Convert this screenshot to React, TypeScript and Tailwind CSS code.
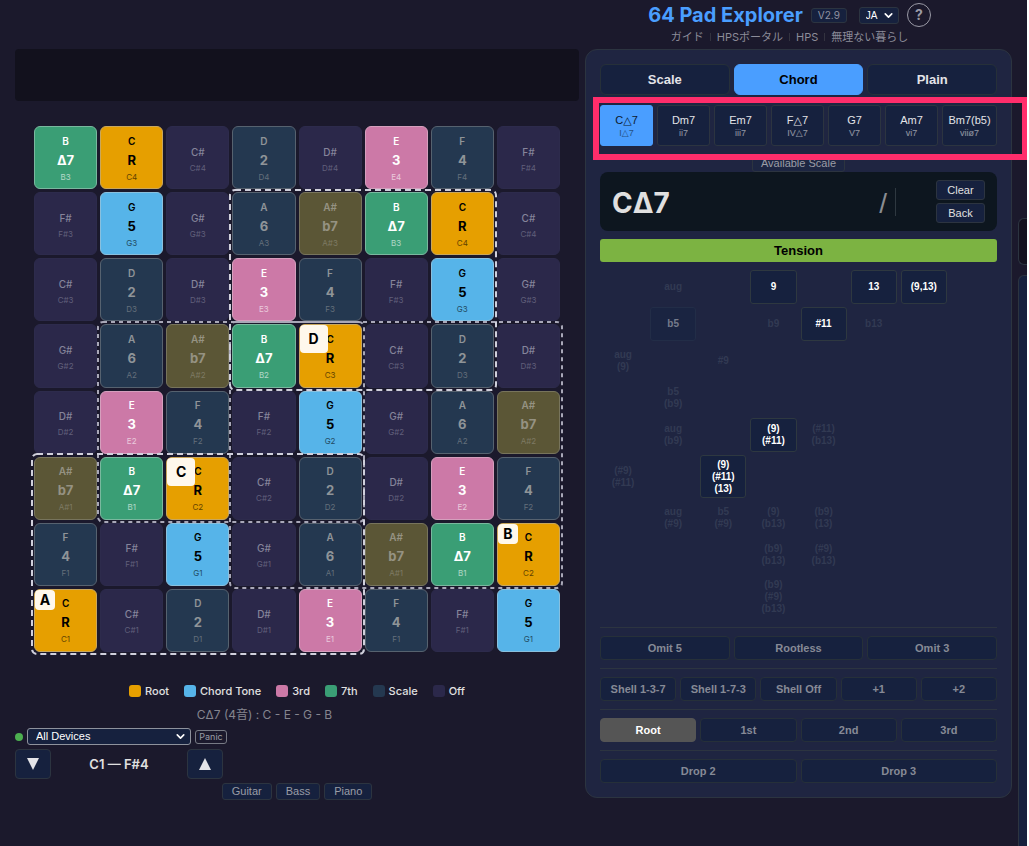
import { ReactNode } from "react";
import { ChevronDown } from "lucide-react";

const NOTES = ["C", "C#", "D", "D#", "E", "F", "F#", "G", "G#", "A", "A#", "B"];

const DEGREES: Record<string, string> = {
  C: "R",
  D: "2",
  E: "3",
  F: "4",
  G: "5",
  A: "6",
  "A#": "b7",
  B: "Δ7",
};

const PAD_STYLES: Record<string, string> = {
  R: "bg-[#e69f00] border-[#c9a75c] text-black",
  "2": "bg-[#243850] border-[#56626f] text-[#8f9498]",
  "3": "bg-[#cc79a7] border-[#d59fbd] text-white",
  "4": "bg-[#243850] border-[#56626f] text-[#8f9498]",
  "5": "bg-[#56b4e9] border-[#89c0de] text-black",
  "6": "bg-[#243850] border-[#56626f] text-[#8f9498]",
  b7: "bg-[#5b5636] border-[#77745c] text-[#959282]",
  "Δ7": "bg-[#3a9e75] border-[#79b89e] text-white",
};

// keyed by "row-col", since the same note repeats on the grid
const BADGES: Record<string, { label: string; className: string }> = {
  "7-0": { label: "A", className: "size-5" },
  "6-7": { label: "B", className: "size-5" },
  "5-2": { label: "C", className: "size-7" },
  "3-4": { label: "D", className: "size-7" },
};

const LEGEND = [
  { label: "Root", className: "bg-[#e69f00]" },
  { label: "Chord Tone", className: "bg-[#56b4e9]" },
  { label: "3rd", className: "bg-[#cc79a7]" },
  { label: "7th", className: "bg-[#3a9e75]" },
  { label: "Scale", className: "bg-[#243850]" },
  { label: "Off", className: "bg-[#2b284a]" },
];

const DIATONIC = [
  ["C△7", "I△7"],
  ["Dm7", "ii7"],
  ["Em7", "iii7"],
  ["F△7", "IV△7"],
  ["G7", "V7"],
  ["Am7", "vi7"],
  ["Bm7(b5)", "viiø7"],
];

type TensionState = "on" | "dim" | "off";

// one array per row, null leaves the cell empty
const TENSIONS: (null | [string, TensionState])[][] = [
  [null, ["aug", "off"], null, ["9", "on"], null, ["13", "on"], ["(9,13)", "on"], null],
  [null, ["b5", "dim"], null, ["b9", "off"], ["#11", "on"], ["b13", "off"], null, null],
  [["aug\n(9)", "off"], null, ["#9", "off"], null, null, null, null, null],
  [null, ["b5\n(b9)", "off"], null, null, null, null, null, null],
  [null, ["aug\n(b9)", "off"], null, ["(9)\n(#11)", "on"], ["(#11)\n(b13)", "off"], null, null, null],
  [["(#9)\n(#11)", "off"], null, ["(9)\n(#11)\n(13)", "on"], null, null, null, null, null],
  [null, ["aug\n(#9)", "off"], ["b5\n(#9)", "off"], ["(9)\n(b13)", "off"], ["(b9)\n(13)", "off"], null, null, null],
  [null, null, null, ["(b9)\n(b13)", "off"], ["(#9)\n(b13)", "off"], null, null, null],
  [null, null, null, ["(b9)\n(#9)\n(b13)", "off"], null, null, null, null],
];

const TENSION_STYLES: Record<TensionState, string> = {
  on: "bg-[#16213e] border-[#2e3840] text-white",
  dim: "bg-[#1a2441] border-[#222d47] text-[#767b8b]",
  off: "bg-transparent border-transparent text-[#323a53]",
};

const Pad = ({ row, col }: { row: number; col: number }) => {
  const pitch = (7 - row) * 5 + col;
  const note = NOTES[pitch % 12];
  const octave = Math.floor(pitch / 12) + 1;
  const degree = DEGREES[note];
  const badge = BADGES[`${row}-${col}`];

  return (
    <button
      className={`relative aspect-square min-w-0 rounded-md border flex flex-col items-center justify-center ${
        degree ? PAD_STYLES[degree] : "bg-[#2b284a] border-[#2d2b4c] pt-1 text-[#85849a]"
      }`}
    >
      <span className={`text-[10px] leading-4 ${degree ? "font-semibold" : "font-medium"}`}>
        {note}
      </span>
      {degree && <span className="text-[13px] leading-[22px] font-bold">{degree}</span>}
      <span className={`text-[8px] opacity-60 ${degree ? "leading-3" : "leading-4"}`}>
        {note}
        {octave}
      </span>
      {badge && (
        <span
          className={`absolute left-0 top-0 rounded flex items-center justify-center bg-[#fff8ec] text-black text-sm font-bold ${badge.className}`}
        >
          {badge.label}
        </span>
      )}
    </button>
  );
};

const PadGrid = () => (
  <div className="relative mx-[19px] mt-[25px] grid grid-cols-8 gap-[3px]">
    {Array.from({ length: 64 }, (_, i) => (
      <Pad key={i} row={Math.floor(i / 8)} col={i % 8} />
    ))}
    <svg
      className="absolute inset-0 size-full overflow-visible pointer-events-none"
      viewBox="0 0 526 526"
      fill="none"
      strokeWidth="2"
    >
      <g stroke="#a9a8b8" strokeDasharray="4 4">
        <rect x="64" y="196" width="266" height="200" rx="5" />
        <rect x="196" y="196" width="332" height="266" rx="5" />
      </g>
      <g stroke="#d0d0dc" strokeDasharray="6 4">
        <rect x="-2" y="328" width="332" height="200" rx="5" />
        <rect x="196" y="64" width="266" height="200" rx="5" />
      </g>
    </svg>
  </div>
);

const SmallButton = ({ children }: { children: ReactNode }) => (
  <button className="h-[17px] rounded-[3px] border border-[#2c3440] bg-[#16213e] px-[9px] font-[Liberation_Sans,sans-serif] text-[11px] leading-[15px] text-[#9a9da6]">
    {children}
  </button>
);

const OptionRow = ({
  options,
  columns,
  active,
}: {
  options: string[];
  columns: string;
  active?: string;
}) => (
  <div className={`mt-2 grid gap-1 border-t border-[#2c3440] pt-2 ${columns}`}>
    {options.map((option) => (
      <button
        key={option}
        className={`h-6 rounded border text-[11px] font-bold ${
          option === active
            ? "bg-[#555555] border-[#555555] text-white"
            : "bg-[#16213e] border-[#263039] text-[#868a96]"
        }`}
      >
        {option}
      </button>
    ))}
  </div>
);

const Header = () => (
  <header className="h-[49px] pr-[18px] flex flex-col items-center">
    <div className="mt-[3px] flex h-6 items-center">
      <h1 className="text-xl font-bold leading-6 text-[#4a9eff]">64 Pad Explorer</h1>
      <span className="ml-2 h-[15px] rounded-[3px] border border-[#2c3440] bg-[#16213e] px-1.5 text-[10px] leading-[13px] text-[#9192a0]">
        V2.9
      </span>
      <label className="relative ml-3 flex items-center">
        <select
          aria-label="Language"
          className="h-[17px] w-10 appearance-none rounded-[3px] border border-[#2c3440] bg-[#16213e] pl-1.5 font-[Liberation_Sans,sans-serif] text-[10px] leading-[15px] text-white"
        >
          <option>JA</option>
        </select>
        <ChevronDown size={13} strokeWidth={3} className="absolute right-1 text-white pointer-events-none" />
      </label>
      <button className="ml-2 size-6 rounded-full border border-[#9a9aa6] text-sm font-bold leading-5 text-[#9a9aa6]">
        ?
      </button>
    </div>
    <nav className="mt-[2px] flex items-center text-[11px] leading-4 text-[#8c8c99]">
      <a href="#guide">ガイド</a>
      <span className="mx-1.5 h-2 w-px bg-[#33333f]" />
      <a href="#portal">HPSポータル</a>
      <span className="mx-1.5 h-2 w-px bg-[#33333f]" />
      <a href="#hps">HPS</a>
      <span className="mx-1.5 h-2 w-px bg-[#33333f]" />
      <a href="#blog">無理ない暮らし</a>
    </nav>
  </header>
);

const ChordPanel = () => (
  <section className="relative rounded-xl border border-[#2c3440] bg-[#1f2541] p-3.5 font-[Liberation_Sans,DejaVu_Sans,sans-serif]">
    <div className="grid grid-cols-3 gap-1">
      {["Scale", "Chord", "Plain"].map((tab) => (
        <button
          key={tab}
          className={`h-[31px] rounded-md border text-[13px] font-bold ${
            tab === "Chord"
              ? "bg-[#4a9eff] border-[#4a9eff] text-black"
              : "bg-[#16213e] border-[#263039] text-[#e4e4e8]"
          }`}
        >
          {tab}
        </button>
      ))}
    </div>

    <div className="mt-2.5 grid grid-cols-[repeat(6,minmax(0,53fr))_minmax(0,55fr)] gap-1">
      {DIATONIC.map(([name, numeral], i) => (
        <button
          key={name}
          className={`h-[41px] min-w-0 whitespace-nowrap rounded-[3px] border ${
            i === 0
              ? "bg-[#4a9eff] border-[#4a9eff] text-[#0c1a2e]"
              : "bg-[#16213e] border-[#2c3440] text-[#e4e4e8]"
          }`}
        >
          <span className="block text-[11px] leading-[14px]">{name}</span>
          <span className="block text-[9px] leading-3 opacity-60">{numeral}</span>
        </button>
      ))}
    </div>

    <div className="mt-2 flex justify-center">
      <button className="h-[18px] rounded-[3px] border border-[#2c3440] bg-[#1d2642] px-2 text-[11px] leading-4 text-[#9a9da6]">
        Available Scale
      </button>
    </div>

    <div className="flex h-[59px] items-center rounded-lg bg-[#0d161f] px-3">
      <output className="flex-1 pt-0.5 font-[Inter,sans-serif] text-[28px] font-bold leading-8 text-[#e0e0e0]">
        CΔ7
      </output>
      <span className="pt-1 text-[28px] leading-8 text-[#8a8d92]">/</span>
      <span className="ml-2 h-7 w-px bg-[#2e3840]" />
      <div className="ml-10 flex w-[49px] flex-col gap-[3px]">
        {["Clear", "Back"].map((label) => (
          <button
            key={label}
            className="h-5 rounded-[3px] border border-[#2c3440] bg-[#16213e] text-[11px] leading-[18px] text-[#e0e0e0]"
          >
            {label}
          </button>
        ))}
      </div>
    </div>

    <button className="mt-2 h-[23px] w-full rounded-[3px] bg-[#7cb342] text-[13px] font-bold text-black">
      Tension
    </button>

    <div className="mt-2 mb-[9px] flex flex-col gap-[3px]">
      {TENSIONS.map((row, r) => (
        <div
          key={r}
          className={`grid grid-cols-8 gap-1 ${r === 5 || r === 8 ? "h-[43px]" : "h-[34px]"}`}
        >
          {row.map((cell, c) =>
            cell ? (
              <button
                key={c}
                className={`min-w-0 whitespace-pre rounded-[3px] border text-[10px] font-bold leading-3 ${TENSION_STYLES[cell[1]]}`}
              >
                {cell[0]}
              </button>
            ) : (
              <span key={c} />
            )
          )}
        </div>
      ))}
    </div>

    <OptionRow options={["Omit 5", "Rootless", "Omit 3"]} columns="grid-cols-3" />
    <OptionRow
      options={["Shell 1-3-7", "Shell 1-7-3", "Shell Off", "+1", "+2"]}
      columns="grid-cols-5"
    />
    <OptionRow options={["Root", "1st", "2nd", "3rd"]} columns="grid-cols-4" active="Root" />
    <OptionRow options={["Drop 2", "Drop 3"]} columns="grid-cols-2" />

    {/* callout around the diatonic chord bar */}
    <div className="pointer-events-none absolute -right-[17px] left-[7px] top-[47px] h-[63px] border-[6px] border-[#ff2d6b]" />
  </section>
);

export default function App() {
  return (
    <div className="flex min-h-screen gap-1.5 overflow-hidden border-r-2 border-white bg-[#1b192c] pl-[15px] font-[Inter,Noto_Sans_CJK_JP,sans-serif] text-[#e0e0e0]">
      <main className="min-w-0 flex-1 pt-[49px]">
        <div className="h-[52px] rounded bg-[#12111d]" />
        <PadGrid />

        <ul className="mt-[31px] flex justify-center gap-[15px] text-[11px] font-medium leading-4">
          {LEGEND.map(({ label, className }) => (
            <li key={label} className="flex items-center gap-1">
              <span className={`size-3 rounded-[3px] ${className}`} />
              {label}
            </li>
          ))}
        </ul>
        <p className="mt-2 pr-[65px] text-center text-xs leading-4 text-[#85858f]">
          CΔ7 (4音) : C - E - G - B
        </p>

        <div className="mt-[5px] flex items-center">
          <span className="mr-1 size-2 rounded-full bg-[#4caf50]" />
          <label className="relative flex items-center">
            <select
              aria-label="MIDI device"
              className="h-[17px] w-[164px] appearance-none rounded-[3px] border border-[#8e929c] bg-[#16213e] pl-2 font-[Liberation_Sans,sans-serif] text-[11px] leading-[15px] text-white"
            >
              <option>All Devices</option>
            </select>
            <ChevronDown size={13} strokeWidth={3} className="absolute right-1 text-white pointer-events-none" />
          </label>
          <button className="ml-1 h-3.5 w-8 rounded-[3px] border border-[#777a84] text-[9px] leading-3 text-[#9a9da6]">
            Panic
          </button>
        </div>

        <div className="mt-1 flex w-[208px] items-center justify-between">
          <button
            aria-label="Octave down"
            className="flex h-[30px] w-9 items-center justify-center rounded border border-[#2c3440] bg-[#16213e]"
          >
            <svg className="size-3" viewBox="0 0 12 12" fill="#e4e4e8">
              <path d="M0 0h12L6 12z" />
            </svg>
          </button>
          <span className="text-[13px] font-semibold leading-4">C1 — F#4</span>
          <button
            aria-label="Octave up"
            className="flex h-[30px] w-9 items-center justify-center rounded border border-[#2c3440] bg-[#16213e]"
          >
            <svg className="size-3" viewBox="0 0 12 12" fill="#e4e4e8">
              <path d="M0 12h12L6 0z" />
            </svg>
          </button>
        </div>

        <div className="mt-1 flex justify-center gap-1">
          <SmallButton>Guitar</SmallButton>
          <SmallButton>Bass</SmallButton>
          <SmallButton>Piano</SmallButton>
        </div>
      </main>

      <div className="w-[427px] shrink-0">
        <Header />
        <ChordPanel />
      </div>

      <aside className="flex w-[9px] shrink-0 flex-col gap-2.5 pt-[218px]">
        <div className="h-[47px] rounded-l-md border border-r-0 border-[#2c3440] bg-[#14121f]" />
        <div className="flex-1 rounded-tl-md border border-r-0 border-b-0 border-[#2c3440] bg-[#16213e]" />
      </aside>
    </div>
  );
}
